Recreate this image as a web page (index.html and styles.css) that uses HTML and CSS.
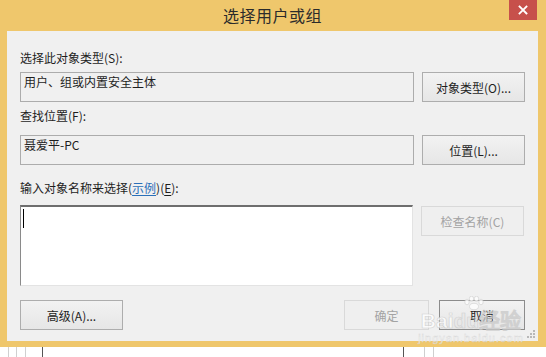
FILE: index.html
```html
<!DOCTYPE html>
<html lang="zh-CN">
<head>
<meta charset="utf-8">
<title>选择用户或组</title>
<link rel="stylesheet" href="styles.css">
</head>
<body>
<div class="window">
  <div class="titlebar">
    <span class="title">选择用户或组</span>
    <button class="close" aria-label="关闭">
      <svg width="10" height="10" viewBox="0 0 10 10"><path d="M1.5 1.5L8.5 8.5M8.5 1.5L1.5 8.5" stroke="#fff" stroke-width="1.8" stroke-linecap="square"/></svg>
    </button>
  </div>
  <div class="content">
    <div class="label l1">选择此对象类型(S):</div>
    <div class="row">
      <div class="field">用户、组或内置安全主体</div>
      <button class="btn">对象类型(O)...</button>
    </div>
    <div class="label l2">查找位置(F):</div>
    <div class="row r2">
      <div class="field">聂爱平-PC</div>
      <button class="btn">位置(L)...</button>
    </div>
    <div class="label l3">输入对象名称来选择(<a class="link">示例</a>)(<u>E</u>):</div>
    <div class="row r3">
      <div class="textarea"><span class="caret"></span></div>
      <button class="btn disabled">检查名称(C)</button>
    </div>
    <div class="footer">
      <button class="btn">高级(A)...</button>
      <div class="spacer"></div>
      <button class="btn disabled ok">确定</button>
      <button class="btn cancel">取消</button>
    </div>
    <svg class="grip" width="10" height="10" viewBox="0 0 10 10">
      <g fill="#b8b8b8"><rect x="7" y="1" width="2" height="2"/><rect x="4" y="4" width="2" height="2"/><rect x="7" y="4" width="2" height="2"/><rect x="1" y="7" width="2" height="2"/><rect x="4" y="7" width="2" height="2"/><rect x="7" y="7" width="2" height="2"/></g>
    </svg>
    <div class="watermark">
      <svg class="wm-paw" width="20" height="14" viewBox="0 0 20 14">
        <g fill="#ffffff" stroke="#cfcfcf" stroke-width="0.8">
          <ellipse cx="3" cy="6" rx="2.2" ry="2.8"/>
          <ellipse cx="7.5" cy="2.8" rx="2.2" ry="2.6"/>
          <ellipse cx="12.5" cy="2.8" rx="2.2" ry="2.6"/>
          <ellipse cx="17" cy="6" rx="2.2" ry="2.8"/>
          <ellipse cx="10" cy="10.5" rx="4.5" ry="3.2"/>
        </g>
      </svg>
      <span class="wm-logo">Bai<span class="wm-du">du</span>经验</span>
      <span class="wm-url">jingyan.baidu.com</span>
    </div>
  </div>
  <div class="frame-bottom"></div>
</div>
<div class="under">
  <span class="vl a"></span><span class="vl b"></span><span class="vl c"></span><span class="vl d"></span>
  <span class="gap"></span>
  <span class="vl e"></span><span class="vl f"></span><span class="vl g"></span>
</div>
</body>
</html>
```
FILE: styles.css
```css
* { box-sizing: border-box; }
html, body { margin: 0; padding: 0; }
body {
  width: 546px;
  height: 357px;
  background: #ffffff;
  font-family: "Noto Sans CJK SC", "Microsoft YaHei", sans-serif;
  font-size: 12px;
  color: #1e1e1e;
  overflow: hidden;
}
.window {
  width: 546px;
  background: #efc76c;
  padding: 0 8px 0 7px;
}
.titlebar {
  height: 31px;
  display: flex;
  align-items: center;
  justify-content: center;
  position: relative;
}
.title {
  font-size: 16px;
  color: #2b2b2b;
  margin-top: -2px;
  letter-spacing: 0.5px;
}
.close {
  position: absolute;
  right: 1px;
  top: 0;
  width: 28px;
  height: 20px;
  border: 0;
  padding: 0;
  background: #c7504b;
  display: flex;
  align-items: center;
  justify-content: center;
}
.content {
  position: relative;
  height: 310px;
  background: #f0f0f0;
  padding: 19px 13px 0 13px;
  display: flex;
  flex-direction: column;
}
.label {
  height: 16px;
  line-height: 16px;
  white-space: nowrap;
}
.l1 { margin-bottom: 6px; }
.l2 { margin-top: 6px; margin-bottom: 11px; }
.l3 { margin-top: 15px; margin-bottom: 9px; }
u { text-decoration: underline; text-underline-offset: 2px; }
.link { color: #2a6fb8; text-decoration: underline; text-underline-offset: 2px; }
.row {
  display: flex;
  gap: 8px;
  align-items: flex-start;
}
.field {
  width: 394px;
  height: 30px;
  border: 1px solid #acacac;
  background: #f0f0f0;
  padding: 1px 3px;
  line-height: 16px;
}
.btn {
  width: 103px;
  height: 30px;
  border: 1px solid #adadad;
  background: linear-gradient(#f2f2f2, #e6e6e6);
  font-family: inherit;
  font-size: 12px;
  color: #1e1e1e;
  padding: 0;
  flex: none;
}
.btn.disabled {
  color: #a3a3a3;
  border-color: #d9d9d9;
  background: #efefef;
}
.r3 .btn { margin-top: 1px; }
.textarea {
  width: 393px;
  height: 81px;
  background: #ffffff;
  border-style: solid;
  border-width: 1px;
  border-color: #6e6e6e #e3e3e3 #e3e3e3 #8a8a8a;
  border-top-width: 2px;
  padding: 2px 0 0 2px;
}
.caret {
  display: block;
  width: 1px;
  height: 19px;
  background: #000;
}
.footer {
  display: flex;
  gap: 10px;
  margin-top: 14px;
}
.spacer { flex: 1; }
.ok { width: 85px; }
.cancel { width: 86px; border-color: #8c8c8c; }
.grip {
  position: absolute;
  right: 2px;
  bottom: 2px;
}
.watermark {
  position: absolute;
  left: 411px;
  top: 265px;
  width: 106px;
  display: flex;
  flex-direction: column;
  align-items: center;
  pointer-events: none;
  opacity: 0.75;
}
.wm-paw { margin-left: 6px; }
.wm-logo {
  font-family: "Liberation Sans", sans-serif;
  font-weight: bold;
  font-size: 21px;
  line-height: 22px;
  color: #ffffff;
  -webkit-text-stroke: 0.6px #c8c8c8;
  white-space: nowrap;
}
.wm-du { color: #e8e8e8; }
.wm-url {
  font-family: "Liberation Sans", sans-serif;
  font-size: 11px;
  line-height: 13px;
  color: #ffffff;
  -webkit-text-stroke: 0.4px #cfcfcf;
  letter-spacing: 1px;
  white-space: nowrap;
}
.frame-bottom { height: 6px; }
.under {
  height: 10px;
  display: flex;
}
.vl { width: 1px; height: 10px; background: #d0d0d0; flex: none; }
.vl.a { margin-left: 8px; }
.vl.b { margin-left: 7px; }
.vl.c { margin-left: 8px; }
.vl.d { margin-left: 16px; background: #555; }
.gap { width: 360px; flex: none; }
.vl.e { background: #555; }
.vl.f { margin-left: 20px; background: #cfcfcf; }
.vl.g { margin-left: 8px; background: #cfcfcf; }
```
